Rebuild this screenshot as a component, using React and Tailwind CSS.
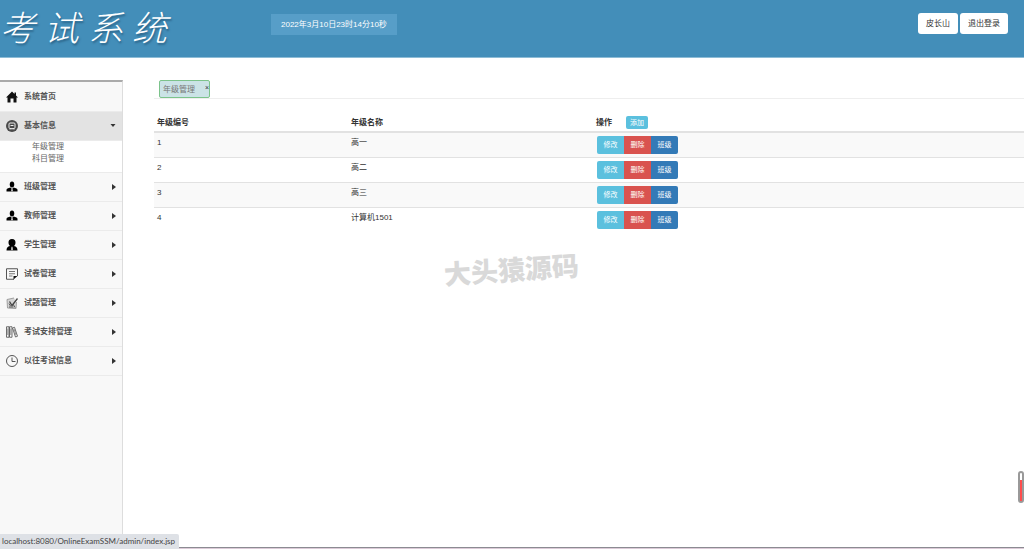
import React, { useState } from "react";

const stroke = { fill: "none", stroke: "#555", strokeWidth: 2 };

const HomeIcon = () => (
  <svg viewBox="0 0 24 24" className="size-3" fill="#111">
    <path d="M12 1 0 13h3v10h6v-8h6v8h6V13h3l-4-4V3h-3v3z" />
  </svg>
);

const InfoIcon = () => (
  <svg viewBox="0 0 24 24" className="size-3">
    <circle cx="12" cy="12" r="12" fill="#4a4a4a" />
    <rect x="6" y="6" width="12" height="11" rx="2" fill="none" stroke="#eee" strokeWidth="2" />
    <path d="M9 11h6" fill="none" stroke="#eee" strokeWidth="2" />
    <path d="m7 20 2-2h6l2 2" fill="none" stroke="#bbb" strokeWidth="1.5" />
  </svg>
);

const PersonIcon = () => (
  <svg viewBox="0 0 24 24" className="size-3" fill="#000">
    <ellipse cx="12" cy="7" rx="4.5" ry="6" />
    <path d="M1 21v-3c0-3 3-4 8-5l3 3 3-3c5 1 8 2 8 5v3z" />
    <path d="m11 16 1-1 1 1 .7 4-1.700 1-1.700-1z" fill="#ddd" />
  </svg>
);

const StudentIcon = () => (
  <svg viewBox="0 0 24 24" className="size-3" fill="#000">
    <path d="M12 0c5 0 7 3 7 7 0 3-1 5-3 7 5 1 7 4 7 9H1c0-5 2-8 7-9-2-2-3-4-3-7 0-4 2-7 7-7z" />
    <path d="m11 16 1-1 1 1 .8 5-1.8 2-1.8-2z" fill="#ddd" />
  </svg>
);

const PaperIcon = () => (
  <svg viewBox="0 0 24 24" className="size-3">
    <path d="M23 16V1.5H1v21h15" {...stroke} />
    <path d="M6 7h12M6 11.5h12M6 16h7" {...stroke} strokeWidth="1.6" />
    <path d="M15 23v-7h8z" fill="#111" />
  </svg>
);

const QuestionIcon = () => (
  <svg viewBox="0 0 24 24" className="size-3">
    <path d="M16 2 2 5l1 17 17 1 1-13" fill="#d5d5d5" stroke="#999" strokeWidth="1.8" />
    <path d="m7 9 5 8L23 3" fill="none" stroke="#444" strokeWidth="2.6" />
    <path d="M6 20h9M14 14l4 7M6 13l3 5" fill="none" stroke="#555" strokeWidth="2" />
  </svg>
);

const BooksIcon = () => (
  <svg viewBox="0 0 24 24" className="size-3">
    <path d="M1 1.5h5v21H1zM7 1.5h5v21H7zM13 4l4-1.5 6 18-4 1.5z" {...stroke} strokeWidth="1.7" />
    <path d="M3.5 5v13M9.5 5v13M16 6l4 12" {...stroke} strokeWidth="1.2" />
  </svg>
);

const ClockIcon = () => (
  <svg viewBox="0 0 24 24" className="size-3">
    <circle cx="12" cy="12" r="11" {...stroke} />
    <path d="M12 5v8h7" {...stroke} />
  </svg>
);

const menus = [
  { title: "系统首页", icon: HomeIcon },
  { title: "基本信息", icon: InfoIcon, children: ["年级管理", "科目管理"] },
  { title: "班级管理", icon: PersonIcon, children: [] },
  { title: "教师管理", icon: PersonIcon, children: [] },
  { title: "学生管理", icon: StudentIcon, children: [] },
  { title: "试卷管理", icon: PaperIcon, children: [] },
  { title: "试题管理", icon: QuestionIcon, children: [] },
  { title: "考试安排管理", icon: BooksIcon, children: [] },
  { title: "以往考试信息", icon: ClockIcon, children: [] },
];

const grades = [
  { id: 1, name: "高一" },
  { id: 2, name: "高二" },
  { id: 3, name: "高三" },
  { id: 4, name: "计算机1501" },
];

const Header = () => (
  <header className="flex h-[58px] shrink-0 items-start border-b border-[#8dbcd6] bg-[#438eb9]">
    <h1 className="flex w-[271px] shrink-0 gap-[9px] pt-[5px] text-[35px] leading-[48px] font-light text-white italic text-shadow-[1px_2px_2px_#2c6488]">
      {["考", "试", "系", "统"].map((char) => (
        <span key={char}>{char}</span>
      ))}
    </h1>
    <time className="mt-3.5 bg-[#579ec8] px-2.5 leading-[21px] text-white">
      2022年3月10日23时14分10秒
    </time>
    <div className="mt-[13px] mr-4 ml-auto flex gap-0.5">
      <button className="rounded-[3px] bg-white px-2 leading-[21px]">皮长山</button>
      <button className="rounded-[3px] bg-white px-2 leading-[21px]">退出登录</button>
    </div>
  </header>
);

const Sidebar = () => {
  const [open, setOpen] = useState("基本信息");

  return (
    <nav className="w-[123px] shrink-0 border-t-2 border-r border-t-[#aaa] border-r-[#ddd] bg-[#f8f8f8]">
      <ul className="pt-px">
        {menus.map(({ title, icon: Icon, children }) => {
          const active = open === title;
          return (
            <li key={title}>
              <button
                onClick={() => setOpen(active ? "" : title)}
                className={`flex h-[29px] w-full items-center border-b border-[#ebebeb] px-1.5 font-bold text-[#555] ${active ? "bg-[#e3e3e3]" : ""}`}
              >
                <Icon />
                <span className="ml-1.5">{title}</span>
                {children && (
                  <svg viewBox="0 0 6 6" className="ml-auto size-1.5" fill="#333">
                    <path d={active ? "M0.5 1h5L3 4z" : "M2 0v6l4-3z"} />
                  </svg>
                )}
              </button>
              {active && children?.length > 0 && (
                <ul className="border-b border-[#ebebeb] bg-white pb-[7px] pl-8 leading-3">
                  {children.map((child) => (
                    <li key={child}>
                      <a href="#" className="text-[#666]">{child}</a>
                    </li>
                  ))}
                </ul>
              )}
            </li>
          );
        })}
      </ul>
    </nav>
  );
};

const GradeTable = () => (
  <table className="mt-[15px] w-full table-fixed text-left">
    <thead>
      <tr className="h-[18px] border-b-2 border-[#e2e2e2] align-bottom">
        <th className="w-[195px] pb-0.5 pl-[3px]">年级编号</th>
        <th className="w-[245px] pb-0.5 pl-0.5">年级名称</th>
        <th className="pb-0.5 pl-0.5">
          <div className="flex items-center gap-3.5">
            操作
            <button className="rounded-xs bg-[#5bc0de] px-1 text-[7px] leading-[13px] font-normal text-white">
              添加
            </button>
          </div>
        </th>
      </tr>
    </thead>
    <tbody>
      {grades.map((grade) => (
        <tr key={grade.id} className="border-t border-[#e2e2e2] align-top odd:bg-[#f9f9f9]">
          <td className="pt-1 pl-[3px]">{grade.id}</td>
          <td className="pt-1 pl-0.5">{grade.name}</td>
          <td className="py-[3px] pl-[3px]">
            <div className="flex text-[7px] leading-[18px] text-white">
              <button className="w-[27px] rounded-l-xs bg-[#5bc0de]">修改</button>
              <button className="w-[27px] bg-[#d9534f]">删除</button>
              <button className="w-[27px] rounded-r-xs bg-[#337ab7]">班级</button>
            </div>
          </td>
        </tr>
      ))}
    </tbody>
  </table>
);

const App = () => {
  return (
    <div className="relative flex min-h-screen flex-col bg-white font-['Liberation_Sans','Noto_Sans_CJK_SC',sans-serif] text-[8px] leading-3 text-[#333]">
      <Header />
      <div className="flex grow pt-[22px]">
        <Sidebar />
        <main className="ml-[31px] min-w-0 grow">
          {/* Open tabs */}
          <div className="flex border-b border-[#eee] pl-[5px]">
            <div className="flex h-[18px] w-[51px] items-start justify-between rounded-xs border border-[#7cc38b] bg-[#cbe3e6] pl-[3px] text-[#777]">
              <span className="leading-[18px]">年级管理</span>
              <button aria-label="关闭" className="text-[7px] leading-3.5 text-[#333]">×</button>
            </div>
          </div>
          <GradeTable />
        </main>
      </div>

      {/* Watermark */}
      <div className="pointer-events-none absolute top-[255px] left-[444px] -rotate-4 text-[27px] leading-8 font-black text-[#d9d9d9]">
        大头猿源码
      </div>

      {/* Scroll gauge */}
      <div className="absolute top-[471px] right-0 flex h-8 w-1.5 items-end rounded-full border-2 border-[#999] bg-white">
        <div className="h-[21px] w-full bg-[#ff4d4d]" />
      </div>

      <div className="fixed inset-x-0 bottom-0 h-0.5 border-t border-[#8b8b92] bg-[#dccbd8]" />
      <div className="fixed bottom-0 left-0 rounded-tr-xs bg-[#dee1e6] pr-1 pl-0.5 font-[Lato,sans-serif] leading-[15px] text-[#444]">
        localhost:8080/OnlineExamSSM/admin/index.jsp
      </div>
    </div>
  );
};

export default App;
